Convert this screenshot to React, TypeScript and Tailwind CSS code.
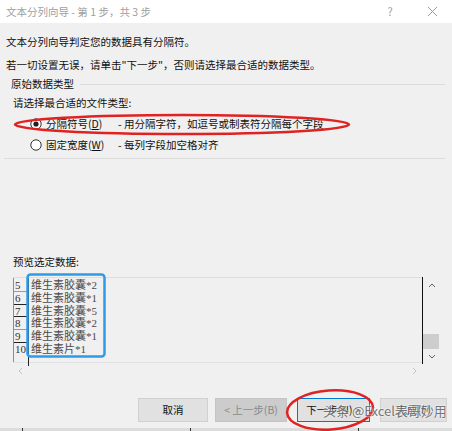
import React from "react";

const ui = { fontFamily: '"Noto Sans CJK SC", "Noto Sans", sans-serif' };
const serif = { fontFamily: '"Liberation Serif", "Noto Sans CJK SC", serif' };

function Radio({ checked }: { checked?: boolean }) {
  return (
    <svg width="12" height="12" viewBox="0 0 12 12" className="shrink-0">
      <circle cx="6" cy="6" r="5.2" fill="white" stroke="#333" strokeWidth="1" />
      {checked && <circle cx="6" cy="6" r="2.6" fill="#222" />}
    </svg>
  );
}

const rows = [
  { n: "5", t: "维生素胶囊*2", line: "border-[#9a9a9a]" },
  { n: "6", t: "维生素胶囊*1", line: "border-[#222]" },
  { n: "7", t: "维生素胶囊*5", line: "border-[#222]" },
  { n: "8", t: "维生素胶囊*2", line: "border-[#9a9a9a]" },
  { n: "9", t: "维生素胶囊*1", line: "border-[#222]" },
  { n: "10", t: "维生素片*1", line: "border-transparent" },
];

export default function App() {
  return (
    <div className="relative w-[452px] h-[431px] overflow-hidden bg-[#f0f0f0] text-[#111]" style={ui}>
      {/* title bar */}
      <div className="h-[23px] bg-white flex items-center pl-[6px] pr-[14px] text-[10.5px] text-[#a0a0a0]">
        <span className="flex-1">文本分列向导 - 第 1 步，共 3 步</span>
        <span className="w-[10px] text-center mr-[32px] text-[11px] text-[#a0a0a0]">?</span>
        <svg width="11" height="11" viewBox="0 0 11 11">
          <path d="M1 1 L10 10 M10 1 L1 10" stroke="#9a9a9a" strokeWidth="1" />
        </svg>
      </div>

      <div className="pl-[6px] pt-[12px] text-[10.5px] leading-[14px]">文本分列向导判定您的数据具有分隔符。</div>
      <div className="pl-[6px] pt-[9px] text-[10.5px] leading-[14px]">若一切设置无误，请单击"下一步"，否则请选择最合适的数据类型。</div>

      {/* group box */}
      <div className="mt-[5px] ml-[4px] mr-[7px] border-b border-[#dcdcdc] pb-[6px]">
        <div className="flex items-center h-[14px]">
          <span className="pl-[7px] pr-[6px] text-[10.5px] leading-[14px]">原始数据类型</span>
          <div className="flex-1 border-t border-[#dcdcdc]" />
        </div>
        <div className="pl-[9px] pt-[5px] text-[10.5px] leading-[14px]">请选择最合适的文件类型:</div>
        <div className="flex items-center h-[14px] mt-[7px] pl-[26px] text-[10.5px]">
          <Radio checked />
          <span className="ml-[4px] w-[72px]">分隔符号(<span className="underline">D</span>)</span>
          <span>- 用分隔字符，如逗号或制表符分隔每个字段</span>
        </div>
        <div className="flex items-center h-[14px] mt-[7px] pl-[26px] text-[10.5px]">
          <Radio />
          <span className="ml-[4px] w-[72px]">固定宽度(<span className="underline">W</span>)</span>
          <span>- 每列字段加空格对齐</span>
        </div>
      </div>

      <div className="pl-[13px] mt-[96px] text-[10.5px] leading-[14px]">预览选定数据:</div>

      {/* preview */}
      <div className="mt-[8px] ml-[13px] w-[427px] flex">
        <div className="w-[410px] flex flex-col">
          <div className="h-[86px] border-t border-[#dedede] border-b border-b-[#e2e2e2] flex">
            <div className="w-[15px] border-l border-[#8c8c8c] pt-[1px]">
              {rows.map((r) => (
                <div key={r.n} className={`h-[12.8px] border-b ${r.line} text-[11px] leading-[12px] pl-[1px] text-[#333]`} style={serif}>
                  {r.n}
                </div>
              ))}
            </div>
            <div className="w-px bg-[#222] h-[88px]" />
            <div className="pl-[2px] pt-[1px]">
              {rows.map((r) => (
                <div key={r.n} className="h-[12.8px] text-[11px] leading-[13px] text-[#4a4a4a]" style={serif}>
                  {r.t}
                </div>
              ))}
            </div>
            <div className="flex-1" />
            <div className="w-px bg-[#111] -mt-px h-[87px]" />
          </div>
          <div className="h-[15px] flex items-center justify-between pl-[5px] pr-[6px]">
            <svg width="5" height="8" viewBox="0 0 5 8"><path d="M4 1 L1 4 L4 7" fill="none" stroke="#c4c4c4" strokeWidth="1" /></svg>
            <svg width="5" height="8" viewBox="0 0 5 8"><path d="M1 1 L4 4 L1 7" fill="none" stroke="#c4c4c4" strokeWidth="1" /></svg>
          </div>
        </div>
        <div className="w-[17px] h-[86px] flex flex-col items-center">
          <div className="h-[14px] flex items-center justify-center mt-[1px]">
            <svg width="8" height="5" viewBox="0 0 8 5"><path d="M1 4 L4 1 L7 4" fill="none" stroke="#606060" strokeWidth="1" /></svg>
          </div>
          <div className="flex-1 w-full flex flex-col justify-end">
            <div className="h-[15px] w-[16px] bg-[#cdcdcd]" />
          </div>
          <div className="h-[14px] flex items-center justify-center">
            <svg width="8" height="5" viewBox="0 0 8 5"><path d="M1 1 L4 4 L7 1" fill="none" stroke="#606060" strokeWidth="1" /></svg>
          </div>
        </div>
      </div>

      {/* buttons */}
      <div className="mt-[20px] flex text-[10.5px] h-[24px]">
        <div className="ml-[138px] w-[70px] bg-[#e1e1e1] border border-[#d0d0d0] flex items-center justify-center">取消</div>
        <div className="ml-[7px] w-[72px] bg-[#cccccc] border border-[#c4c4c4] flex items-center justify-center text-[#8a8a8a]">&lt; 上一步(B)</div>
        <div className="ml-[10px] w-[73px] bg-[#e1e1e1] border border-[#0078d7] flex items-center justify-center">下一步(N) &gt;</div>
        <div className="ml-[10px] w-[67px] bg-[#e1e1e1] border border-[#d0d0d0] flex items-center justify-center">完成(F)</div>
      </div>

      {/* bottom strip of window behind */}
      <div className="absolute left-0 right-0 bottom-0 h-[3px] bg-[#dcdcdc]">
        <div className="absolute left-[22px] top-0 w-px h-[3px] bg-[#333]" />
        <div className="absolute left-[190px] top-0 w-px h-[3px] bg-[#333]" />
        <div className="absolute left-[358px] top-0 w-px h-[3px] bg-[#333]" />
      </div>

      {/* annotations */}
      <svg className="absolute left-0 top-0 pointer-events-none" width="452" height="431" viewBox="0 0 452 431">
        <ellipse cx="182" cy="124.5" rx="167" ry="9.5" fill="none" stroke="#e02222" strokeWidth="2.6" />
        <rect x="27.5" y="274.5" width="77" height="82" rx="3" fill="none" stroke="#2e9be8" strokeWidth="2.5" />
        <ellipse cx="330" cy="410" rx="43" ry="19.5" transform="rotate(-4 330 410)" fill="none" stroke="#e02222" strokeWidth="2.6" />
      </svg>

      {/* watermark */}
      <div
        className="absolute left-[323px] top-[402px] text-[13px] leading-[18px] text-[#6a6a6a] opacity-90"
        style={{ ...ui, textShadow: "0 0 2px #fff, 0 0 2px #fff" }}
      >
        头条 @Excel表哥妙用
      </div>
    </div>
  );
}
